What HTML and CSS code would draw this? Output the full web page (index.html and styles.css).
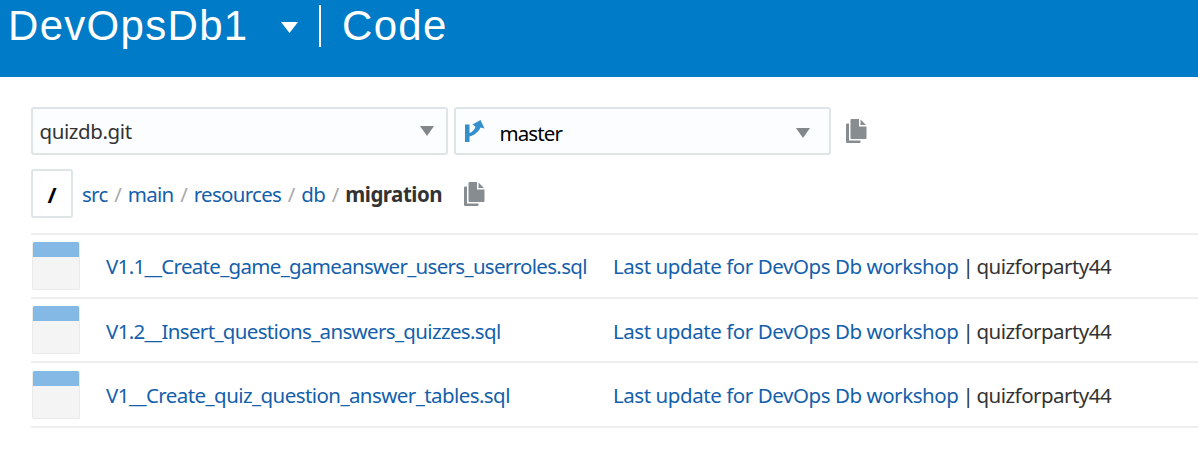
FILE: index.html
```html
<!DOCTYPE html>
<html lang="en">
<head>
<meta charset="utf-8">
<title>DevOpsDb1 | Code</title>
<link rel="stylesheet" href="styles.css">
</head>
<body>
<svg class="defs" width="0" height="0">
  <symbol id="copy" viewBox="0 0 21 24">
    <path d="M0 5.500q0-1 1-1h2V21.500h11.500V23q0 1-1 1H1q-1 0-1-1z"/>
    <path d="M4.500 1q0-1 1-1H13v7.500h7.500v11.500q0 1-1 1h-14q-1 0-1-1z"/>
    <path d="M14.500 0.500L20 6H14.500z"/>
  </symbol>
</svg>
<header class="banner">
  <span class="project">DevOpsDb1</span>
  <svg class="banner-caret" viewBox="0 0 17 11"><path d="M0 0h17L8.500 11z"/></svg>
  <span class="divider"></span>
  <span class="section">Code</span>
</header>
<main class="content">
  <div class="toolbar">
    <div class="select repo"><span class="repo-name">quizdb.git</span><svg class="caret" viewBox="0 0 14 10"><path d="M0 0h14L7 10z"/></svg></div>
    <div class="select branch">
      <svg class="branch-icon" viewBox="0 0 20 22"><path d="M0 4.500h4.500v8.500c2.500-.7 5-3 6-6.200L7.500 4.500 15.500 0l4 8.500-4-1C13.500 12 9 15.500 4.500 16.500V22H0z"/></svg>
      <span class="branch-name">master</span><svg class="caret" viewBox="0 0 14 10"><path d="M0 0h14L7 10z"/></svg>
    </div>
    <svg class="copy"><use href="#copy"/></svg>
  </div>
  <nav class="path">
    <a class="root">/</a>
    <div class="crumbs"><a>src</a><i>/</i><a>main</a><i>/</i><a>resources</a><i>/</i><a>db</a><i>/</i><b>migration</b></div>
    <svg class="copy"><use href="#copy"/></svg>
  </nav>
  <div class="files">
    <div class="row"><span class="thumb"></span><a class="file create-game">V1.1__Create_game_gameanswer_users_userroles.sql</a><span class="commit"><a>Last update for DevOps Db workshop</a><span class="author">| quizforparty44</span></span></div>
    <div class="row middle"><span class="thumb"></span><a class="file insert">V1.2__Insert_questions_answers_quizzes.sql</a><span class="commit"><a>Last update for DevOps Db workshop</a><span class="author">| quizforparty44</span></span></div>
    <div class="row last"><span class="thumb"></span><a class="file create-quiz">V1__Create_quiz_question_answer_tables.sql</a><span class="commit"><a>Last update for DevOps Db workshop</a><span class="author">| quizforparty44</span></span></div>
  </div>
</main>
</body>
</html>
```
FILE: styles.css
```css
* { box-sizing: border-box; }
body { margin: 0; height: 463px; overflow: hidden; background: #fff; color: #333; font: 20.5px/30px "Noto Sans", "Open Sans", sans-serif; white-space: nowrap; }
a { color: #145fab; }
svg { display: block; flex: none; }
.defs { position: absolute; }
.banner { height: 77px; background: #007bc8; color: #fff; display: flex; align-items: flex-start; padding-left: 8px; font: 42px/52px "Liberation Sans", Arial, sans-serif; letter-spacing: 1.3px; }
.project { width: 273px; }
.banner-caret { width: 17px; height: 11px; margin-top: 22px; fill: #fff; }
.divider { width: 2px; height: 42px; margin: 5px 21px 0 21px; background: #fff; }
.content { padding: 30px 0 0 31px; }
.toolbar { display: flex; height: 48px; }
.select { height: 48px; border: 2px solid #dfe4e7; border-radius: 3px; background: #fcfdff; display: flex; align-items: center; }
.repo { width: 417px; padding: 0 12px 0 6.5px; margin-right: 6px; }
.branch { width: 377px; padding: 0 19px 0 9px; margin-right: 14.5px; color: #000; }
.branch-icon { width: 20px; height: 22px; margin: -1px 14.500px 0 0; fill: #358fcb; }
.caret { width: 14px; height: 10px; margin-left: auto; fill: #82878b; }
.branch .caret { margin-top: 4px; }
.branch-name { padding-top: 4px; letter-spacing: -.9px; }
.repo-name { letter-spacing: -.4px; }
.copy { width: 21px; height: 24px; fill: #878c90; }
.toolbar .copy { margin-top: 12px; }
.path { display: flex; align-items: center; margin-top: 14px; height: 49px; }
.root { width: 42px; height: 49px; border: 2px solid #dfe4e7; border-radius: 3px; color: #000; font-size: 22px; font-weight: 700; text-align: center; line-height: 47px; }
.crumbs { display: flex; width: 382px; margin-left: 9px; letter-spacing: -.7px; }
.crumbs i { font-style: normal; color: #aaa; margin: 0 6.6px; }
.crumbs b { letter-spacing: -.5px; }
.files { margin-top: 15px; border-top: 2px solid #ededed; }
.row { height: 64px; border-bottom: 2px solid #ededed; display: flex; align-items: center; padding-left: 1px; }
.last { height: 65px; }
.thumb { width: 48px; height: 48px; border: 1px solid #eaeaea; border-top: 0; border-radius: 2px; background: linear-gradient(#85b9e5 15px, #f4f4f4 15px) border-box; }
.file { width: 507px; margin-left: 26px; }
.middle .file, .middle .commit { padding-top: 2px; }
.create-game { letter-spacing: -.69px; }
.insert { letter-spacing: -.66px; }
.create-quiz { letter-spacing: -.57px; }
.commit { letter-spacing: -.44px; }
.author { margin-left: 4px; letter-spacing: -.52px; word-spacing: -1.5px; }
```
